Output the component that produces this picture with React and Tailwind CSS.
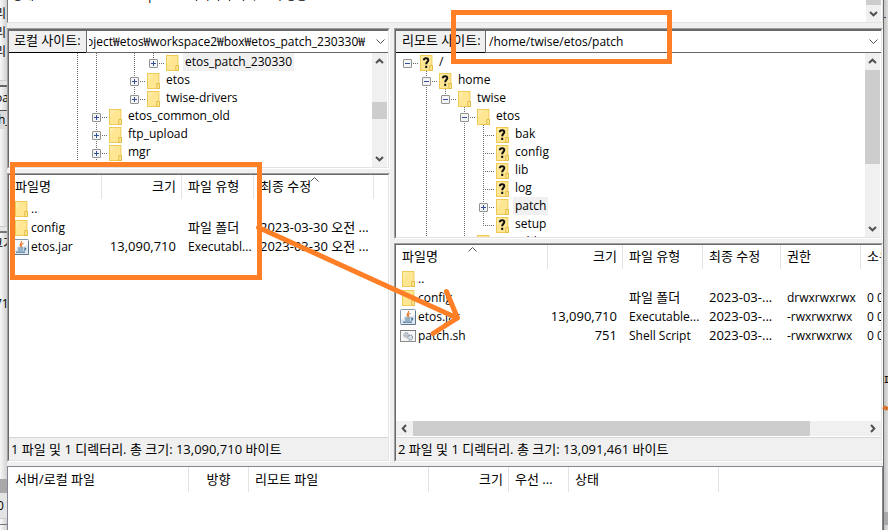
import React from "react";

const kr = "font-['Open_Sans','Noto_Sans_CJK_KR',sans-serif]";

function Chevron({ dir = "down", bold = true }) {
  const turn = { down: "", up: "rotate-180", left: "rotate-90", right: "-rotate-90" }[dir];
  return (
    <svg viewBox="0 0 9 9" className={`size-[9px] ${turn}`} fill="none" stroke={bold ? "#505050" : "#555"} strokeWidth={bold ? 2 : 1}>
      <path d={bold ? "M1 3 L4.5 6.3 L8 3" : "M0.5 2.5 L4.5 6.5 L8.5 2.5"} />
    </svg>
  );
}

function Folder({ unknown }) {
  return (
    <svg viewBox="0 0 13 16" className="h-4 w-[13px] shrink-0">
      <rect x="0.5" y="0.5" width="11.4" height="15" fill="#ffe693" stroke="#efcb55" />
      <path d="M1 1h5L1 9z" fill="#fff0b3" opacity="0.6" />
      <path d="M9.8 15.5V10.5h2.7v5z" fill="#ffe693" stroke="#e2bb45" />
      {unknown && (
        <path d="M3.8 5.2C3.8 2.6 8.3 2.4 8.3 5C8.3 6.7 6.2 6.8 6.2 9.2M6.2 10.8v2.2" fill="none" stroke="#111" strokeWidth="2" />
      )}
    </svg>
  );
}

function JarIcon() {
  return (
    <svg viewBox="0 0 16 16" className="size-4 shrink-0" fill="none">
      <rect x="0.5" y="0.5" width="15" height="15" rx="1" fill="#dfe8f1" stroke="#8599ae" />
      <path d="M1 1h14v5L1 11z" fill="#f8fafc" />
      <path d="M8.5 2C9.5 4 5.5 5 7.5 8M10.5 4.2C8 5.2 8 6 8.8 8" stroke="#e8792b" strokeWidth="1.2" />
      <path d="M4.5 9h6M5 11h5M3 13.2h9M11 9.2c2.500-.6 2.200 1.800-.2 2.200" stroke="#4d7896" strokeWidth="1.2" />
      <path d="M1 15.500h14.500V2" stroke="#60758a" />
    </svg>
  );
}

function ScriptIcon() {
  return (
    <svg viewBox="0 0 16 16" className="size-4 shrink-0" fill="none">
      <rect x="0.5" y="2.5" width="15" height="11" fill="#f7f7f7" stroke="#8b8b8b" />
      <path d="M0 2.500h16" stroke="#777" />
      <circle cx="6" cy="7" r="2.2" stroke="#9aa3ab" strokeWidth="1.4" strokeDasharray="1.2 .5" />
      <circle cx="6" cy="7" r="1" stroke="#a9b2ba" />
      <circle cx="10.2" cy="9.5" r="2.3" stroke="#8a98a6" strokeWidth="1.4" strokeDasharray="1.2 .5" />
      <circle cx="10.2" cy="9.5" r="1" fill="#b8d4ea" />
    </svg>
  );
}

function VScroll({ children }) {
  return (
    <div className="flex w-[15px] shrink-0 flex-col bg-[#f0f0f0]">
      <button aria-label="위로" className="flex h-[17px] shrink-0 items-center justify-center"><Chevron dir="up" /></button>
      <div className="min-h-0 flex-1">{children}</div>
      <button aria-label="아래로" className="flex h-[17px] shrink-0 items-center justify-center"><Chevron /></button>
    </div>
  );
}

/* Guide codes: "." blank, "|" full line, "^" line above the row's centre */
function Guide({ code, branch, toggle }) {
  const reach = { "|": "inset-y-0", "^": "top-0 h-[10px]" }[code];
  return (
    <span className="relative h-[18px] w-[19px] shrink-0">
      {reach && <span className={`absolute left-[9px] w-px bg-[repeating-linear-gradient(to_bottom,#6b6b6b_0_1px,transparent_1px_2px)] ${reach}`} />}
      {branch && <span className="absolute top-[10px] left-[9px] h-px w-[12px] bg-[repeating-linear-gradient(to_right,#6b6b6b_0_1px,transparent_1px_2px)]" />}
      {toggle && (
        <button aria-label={toggle === "+" ? "펼치기" : "접기"} className="absolute top-[6px] left-[5px] size-[9px] rounded-[1px] border border-[#919191] bg-[#f5f5f5]">
          <span className="absolute top-[3px] left-[1px] h-px w-[5px] bg-[#35509a]" />
          {toggle === "+" && <span className="absolute top-[1px] left-[3px] h-[5px] w-px bg-[#35509a]" />}
        </button>
      )}
    </span>
  );
}

function Tree({ rows }) {
  return (
    <ul className="min-w-0 flex-1 overflow-hidden text-[12px]">
      {rows.map((r) => (
        <li key={r.name} className="flex h-[18px] items-center">
          {r.guides.split("").map((g, i, all) => (
            <Guide key={i} code={g} branch={i === all.length - 1} toggle={i === all.length - 1 ? r.toggle : null} />
          ))}
          <span className="ml-[3px] pt-px"><Folder unknown={r.unknown} /></span>
          <span className={`ml-1 px-[2px] leading-[18px] ${r.selected ? "bg-[#f0f0f0]" : ""}`}>{r.name}</span>
        </li>
      ))}
    </ul>
  );
}

const localTree = [
  { name: "etos_patch_230330", guides: "||.|^", toggle: "+", selected: true },
  { name: "etos", guides: "||.|", toggle: "+" },
  { name: "twise-drivers", guides: "||.^", toggle: "+" },
  { name: "etos_common_old", guides: "||", toggle: "+" },
  { name: "ftp_upload", guides: "||", toggle: "+" },
  { name: "mgr", guides: "||", toggle: "+" },
];

const remoteTree = [
  { name: "/", guides: ".", toggle: "-", unknown: true },
  { name: "home", guides: ".|", toggle: "-", unknown: true },
  { name: "twise", guides: ".|^", toggle: "-" },
  { name: "etos", guides: ".|.|", toggle: "-" },
  { name: "bak", guides: ".|.||", unknown: true },
  { name: "config", guides: ".|.||", unknown: true },
  { name: "lib", guides: ".|.||", unknown: true },
  { name: "log", guides: ".|.||", unknown: true },
  { name: "patch", guides: ".|.||", toggle: "+", selected: true },
  { name: "setup", guides: ".|.|^", unknown: true },
  { name: "portable", guides: ".|.|" },
];

function Panel({ className = "", children }) {
  return (
    <div className={`flex flex-col border border-t-[#a0a0a0] border-r-white border-b-white border-l-[#a0a0a0] ${className}`}>
      <div className="flex min-h-0 flex-1 flex-col border border-t-[#696969] border-r-[#e3e3e3] border-b-[#e3e3e3] border-l-[#696969] bg-white">
        {children}
      </div>
    </div>
  );
}

function SiteBar({ id, label, value, labelClass, inputClass }) {
  return (
    <div className="flex h-[23px] shrink-0 border-t border-t-[#696969]">
      <label htmlFor={id} className={`shrink-0 border-b border-black bg-[#f0f0f0] text-[13px] leading-[19px] whitespace-nowrap ${labelClass}`}>
        {label}
      </label>
      <div className="flex min-w-0 flex-1 border-b border-l border-[#696969]">
        <input id={id} type="text" defaultValue={value} className={`min-w-0 flex-1 bg-white text-[12px] leading-5 outline-none ${inputClass}`} />
        <button aria-label="사이트 목록" className="flex w-[15px] shrink-0 items-center justify-center"><Chevron bold={false} /></button>
      </div>
    </div>
  );
}

function Files({ columns, rows, sorted, sortClass }) {
  return (
    <div className="min-h-0 flex-1 overflow-hidden">
      <table className="w-px table-fixed border-separate border-spacing-0 text-[12px]">
        <colgroup>
          {columns.map((c) => <col key={c.name} className={c.width} />)}
        </colgroup>
        <thead>
          <tr className="h-6">
            {columns.map((c, i) => (
              <th key={c.name} className={`relative border-r border-[#e3e3e3] p-0 pb-[2px] text-[13px] leading-[22px] font-normal whitespace-nowrap ${c.right ? "pr-[5px] text-right" : "pl-[6px] text-left"}`}>
                {c.name}
                {i === sorted && <span className={`absolute top-0 ${sortClass}`}><span className="block rotate-180"><Chevron bold={false} /></span></span>}
              </th>
            ))}
          </tr>
        </thead>
        <tbody>
          {rows.map((r) => (
            <tr key={r.cells[0]} className="h-[19px]">
              {r.cells.map((c, i) => (
                <td key={i} className={`p-0 leading-[19px] whitespace-nowrap ${/^\d\d|파일/.test(c) ? "text-[13px]" : ""} ${columns[i].right ? "pr-[6px] text-right" : i === 0 ? "pl-1" : "pl-[6px]"}`}>
                  {i === 0 ? (
                    <span className="flex items-center gap-[2px]">
                      <span className="flex w-4 justify-center">{r.icon}</span>
                      {c}
                    </span>
                  ) : c}
                </td>
              ))}
            </tr>
          ))}
        </tbody>
      </table>
    </div>
  );
}

function Status({ children }) {
  return (
    <p className="h-[23px] shrink-0 border-t border-[#d7d7d7] bg-[#f0f0f0] pl-[2px] text-[13px] leading-[22px] whitespace-nowrap">{children}</p>
  );
}

const localColumns = [
  { name: "파일명", width: "w-[93px]" },
  { name: "크기", width: "w-[80px]", right: true },
  { name: "파일 유형", width: "w-[72px]" },
  { name: "최종 수정", width: "w-[120px]" },
];
const localRows = [
  { icon: <Folder />, cells: ["..", "", "", ""] },
  { icon: <Folder />, cells: ["config", "", "파일 폴더", "2023-03-30 오전 ..."] },
  { icon: <JarIcon />, cells: ["etos.jar", "13,090,710", "Executabl...", "2023-03-30 오전 ..."] },
];
const remoteColumns = [
  { name: "파일명", width: "w-[152px]" },
  { name: "크기", width: "w-[75px]", right: true },
  { name: "파일 유형", width: "w-[80px]" },
  { name: "최종 수정", width: "w-[78px]" },
  { name: "권한", width: "w-[80px]" },
  { name: "소유자", width: "w-[90px]" },
];
const remoteRows = [
  { icon: <Folder />, cells: ["..", "", "", "", "", ""] },
  { icon: <Folder />, cells: ["config", "", "파일 폴더", "2023-03-...", "drwxrwxrwx", "0 0"] },
  { icon: <JarIcon />, cells: ["etos.jar", "13,090,710", "Executable...", "2023-03-...", "-rwxrwxrwx", "0 0"] },
  { icon: <ScriptIcon />, cells: ["patch.sh", "751", "Shell Script", "2023-03-...", "-rwxrwxrwx", "0 0"] },
];

const queue = [
  ["서버/로컬 파일", "w-[181px] pl-[7px] text-left"],
  ["방향", "w-[60px] text-center"],
  ["리모트 파일", "w-[180px] pl-[6px] text-left"],
  ["크기", "w-[80px] pr-[5px] text-right"],
  ["우선 ...", "w-[60px] pl-[6px] text-left"],
  ["상태", "w-[150px] pl-[6px] text-left"],
];

function BackWindow() {
  return (
    <div aria-hidden="true" className="flex w-[7px] shrink-0 flex-col overflow-hidden bg-linear-to-r from-[#f8f8f8] to-[#d2d2d2] text-[12px] whitespace-nowrap">
      <div className="-ml-[5px] h-[80px] shrink-0 pt-1 leading-[19px]"><p>리</p><p>리</p><p>리</p></div>
      <div className="h-[7px] shrink-0 border-t border-b-2 border-t-[#ccc] border-b-[#666] bg-[#e4e4e4]" />
      <p className="h-6 shrink-0 border-b border-[#555] leading-[22px]"><span className="-ml-[5px]">oa</span></p>
      <p className="h-[18px] shrink-0 bg-[#d9d9d9] leading-[18px]"><span className="-ml-[2px]">h_</span></p>
      <div className="h-[97px] shrink-0" />
      <div className="h-[7px] shrink-0 border-t border-b-2 border-t-[#ccc] border-b-[#777] bg-[#e4e4e4]" />
      <p className="-ml-[8px] h-[60px] shrink-0 leading-[22px]">크기</p>
      <p className="-ml-[5px] h-[186px] shrink-0 leading-[22px]">71</p>
      <div className="h-[14px] shrink-0 bg-[#a9a9a9]" />
      <p className="h-[26px] shrink-0 border-b border-[#ccc] bg-[#e4e4e4] leading-[26px]"><span className="-ml-[3px]">0</span></p>
      <div className="mt-[5px] border-t border-[#777]" />
    </div>
  );
}

function Annotations() {
  return (
    <svg aria-hidden="true" className="pointer-events-none absolute top-0 left-0 h-[530px] w-[888px]" viewBox="0 0 888 530" fill="none" stroke="#ff7f27" strokeWidth="5">
      <rect x="12.5" y="164.5" width="247" height="113" />
      <rect x="453.5" y="12.5" width="216" height="49" />
      <path d="M258.500 227.500 L457 318 M446.500 291.500 L457.500 318 L433 333.500" strokeLinecap="round" strokeLinejoin="round" />
      <path d="M883 407 L888 409" stroke="#d9702a" strokeWidth="4" />
    </svg>
  );
}

export default function App() {
  return (
    <div className={`relative flex h-screen overflow-hidden bg-[#f0f0f0] text-black ${kr}`}>
      <BackWindow />
      <main className="flex min-w-0 flex-1 flex-col">
        <div className="flex h-[23px] shrink-0 border-r border-b border-l border-[#e3e3e3] border-l-[#777] bg-white">
          <div className="h-[3px] min-w-0 flex-1 overflow-hidden pl-1 text-[12px] whitespace-nowrap">
            <p className="-mt-[13px] leading-[18px]">상태: "/home/twise/etos/patch" 디렉터리 목록 조회 성공</p>
          </div>
          <div className="flex w-[15px] shrink-0 flex-col bg-[#f0f0f0]">
            <div className="h-[5px] bg-[#cdcdcd]" />
            <button aria-label="아래로" className="flex h-[17px] items-center justify-center"><Chevron /></button>
          </div>
          <div className="w-px bg-white" />
        </div>

        <div className="grid min-h-0 flex-1 grid-cols-[383fr_489fr] gap-1 pt-[5px]">
          <section className="flex min-h-0 min-w-0 flex-col gap-1">
            <Panel className="h-[141px] shrink-0">
              <SiteBar id="local" label="로컬 사이트:" value="oject₩etos₩workspace2₩box₩etos_patch_230330₩" labelClass="w-[77px] pl-[5px]" inputClass="indent-[-3px] ml-[2px]" />
              <div className="flex min-h-0 flex-1">
                <div className="flex min-w-0 flex-1 pl-[59px]"><Tree rows={localTree} /></div>
                <VScroll><div className="mt-8 h-[17px] bg-[#cdcdcd]" /></VScroll>
                <div className="w-px" />
              </div>
            </Panel>
            <Panel className="min-h-0 flex-1">
              <Files columns={localColumns} rows={localRows} sorted={3} sortClass="left-[56px]" />
              <Status>1 파일 및 1 디렉터리. 총 크기: 13,090,710 바이트</Status>
            </Panel>
          </section>

          <section className="flex min-h-0 min-w-0 flex-col gap-1">
            <Panel className="h-[211px] shrink-0">
              <SiteBar id="remote" label="리모트 사이트:" value="/home/twise/etos/patch" labelClass="w-[89px] pl-[6px]" inputClass="pl-[3px]" />
              <div className="flex min-h-0 flex-1">
                <div className="flex min-w-0 flex-1 pl-[2px]"><Tree rows={remoteTree} /></div>
                <VScroll><div className="h-[94px] bg-[#cdcdcd]" /></VScroll>
                <div className="w-px" />
              </div>
            </Panel>
            <Panel className="min-h-0 flex-1">
              <Files columns={remoteColumns} rows={remoteRows} sorted={0} sortClass="left-[72px]" />
              <div className="mb-px flex h-[15px] shrink-0 bg-[#f0f0f0]">
                <button aria-label="왼쪽으로" className="flex w-[17px] items-center justify-center"><Chevron dir="left" /></button>
                <div className="min-w-0 flex-1"><div className="h-full w-[88%] bg-[#cdcdcd]" /></div>
                <button aria-label="오른쪽으로" className="flex w-[17px] items-center justify-center"><Chevron dir="right" /></button>
              </div>
              <Status>2 파일 및 1 디렉터리. 총 크기: 13,091,461 바이트</Status>
            </Panel>
          </section>
        </div>

        <section className="mt-1 h-16 shrink-0 overflow-hidden border-t border-r border-l border-[#828790] bg-white">
          <table className="w-px table-fixed border-separate border-spacing-0 text-[13px]">
            <thead>
              <tr className="h-[25px]">
                {queue.map(([name, cls]) => (
                  <th key={name} className={`border-r border-[#e3e3e3] pt-0 pb-px leading-6 font-normal whitespace-nowrap ${cls}`}>{name}</th>
                ))}
              </tr>
            </thead>
          </table>
        </section>
      </main>
      <div aria-hidden="true" className="flex w-[5px] shrink-0 flex-col overflow-hidden border-l border-[#696969] bg-linear-to-r from-[#c2c2c2] to-[#dedede] text-[12px]">
        <div className="mt-[17px] h-px w-[2px] bg-[#446]" />
        <p className="mt-[354px] leading-[18px]">패</p>
        <div className="mt-[122px] h-[13px] bg-[#a9a9a9]" />
      </div>
      <Annotations />
    </div>
  );
}
